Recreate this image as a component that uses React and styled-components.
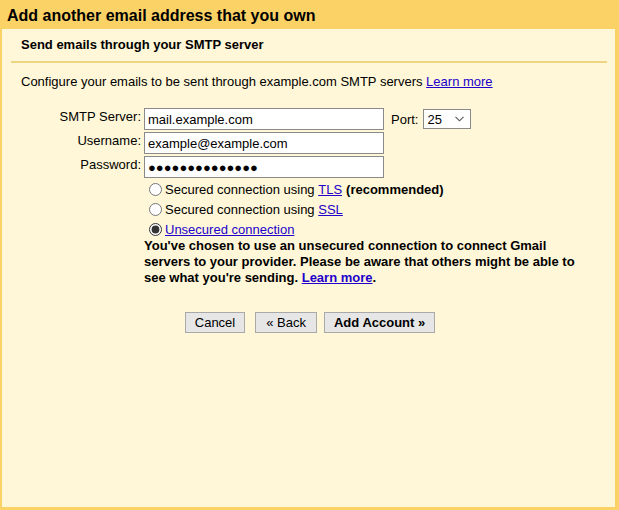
import React from "react";
import styled, { createGlobalStyle } from "styled-components";

const Global = createGlobalStyle`
    html, body {margin:0; padding:0; background:#fbd266;}
    body {font-family:"Liberation Sans", Arial, sans-serif; font-size:13px; color:#000;}
`;

const Page = styled.div`
    display:flex; flex-direction:column; width:619px; height:510px; background:#fbd266;
`;

const TitleBar = styled.h1`
    margin:0; height:29px; padding:0 0 0 7px; box-sizing:border-box;
    font-size:16px; font-weight:bold; line-height:31px; color:#000;
`;

const Panel = styled.div`
    flex:1; margin:0 4px 3px 2px; background:#fff7d7;
`;

const SectionHead = styled.h2`
    margin:0 8px 0 9px; padding:8px 0 9px 10px;
    border-bottom:2px solid #eed582;
    font-size:13px; font-weight:bold; line-height:15px;
`;

const Intro = styled.p`
    margin:11px 0 0 19px; line-height:15px;
`;

const Link = styled.a`
    color:#2200cc; text-decoration:underline; cursor:pointer;
`;

const FormGrid = styled.div`
    display:grid; grid-template-columns:139px 240px auto; column-gap:3px; row-gap:2px;
    align-items:center; margin-top:19px;
`;

const Label = styled.label`
    text-align:right; align-self:start; padding-top:1px; line-height:15px;
`;

const TextInput = styled.input`
    box-sizing:border-box; width:240px; height:22px; margin:0; padding:1px 3px;
    border:1px solid #8a8a8a; background:#fff;
    font-family:"Liberation Sans", "DejaVu Sans", Arial, sans-serif; font-size:13px; color:#000;
    outline:none;
`;

const PortBox = styled.div`
    display:flex; align-items:center; gap:5px; padding-left:4px;
`;

const SelectWrap = styled.div`
    position:relative; width:48px; height:20px;
`;

const PortSelect = styled.select`
    appearance:none; box-sizing:border-box; width:48px; height:20px; margin:0; padding:0 0 0 3px;
    border:1px solid #8a8a8a; border-radius:0; background:#fff;
    font-family:"Liberation Sans", Arial, sans-serif; font-size:13px; color:#000;
`;

const Chevron = styled.svg`
    position:absolute; right:7px; top:7px; width:9px; height:6px; pointer-events:none;
`;

const Options = styled.div`
    margin:1px 0 0 142px; width:447px;
`;

const RadioRow = styled.label`
    display:flex; align-items:center; height:20px; line-height:15px;
`;

const Radio = styled.input`
    width:13px; height:13px; margin:0 3px 0 5px; accent-color:#333;
`;

const Bold = styled.b`
    margin-left:4px;
`;

const Warning = styled.p`
    margin:-1px 0 0; font-weight:bold; line-height:16px;
`;

const Buttons = styled.div`
    display:flex; justify-content:center; gap:7px; margin-top:26px; padding-left:3px;
`;

const Button = styled.button`
    box-sizing:border-box; height:21px; margin-right:${p => p.$after || 0}px;
    padding:0 ${p => p.$pad || 9}px;
    border:1px solid #a9a9a9; background:#e6e6e6; border-radius:0;
    font-family:"Liberation Sans", Arial, sans-serif; font-size:13px;
    font-weight:${p => (p.$primary ? "bold" : "normal")}; color:#000;
`;

export default function App() {
    return (
        <Page>
            <Global />
            <TitleBar>Add another email address that you own</TitleBar>
            <Panel>
                <SectionHead>Send emails through your SMTP server</SectionHead>
                <Intro>
                    Configure your emails to be sent through example.com SMTP servers <Link>Learn more</Link>
                </Intro>
                <FormGrid>
                    <Label>SMTP Server:</Label>
                    <TextInput defaultValue="mail.example.com" />
                    <PortBox>
                        Port:
                        <SelectWrap>
                            <PortSelect defaultValue="25">
                                <option>25</option>
                                <option>465</option>
                                <option>587</option>
                            </PortSelect>
                            <Chevron viewBox="0 0 9 6">
                                <path d="M0.5 0.8 L4.5 4.8 L8.5 0.8" fill="none" stroke="#555" strokeWidth="1.1" />
                            </Chevron>
                        </SelectWrap>
                    </PortBox>
                    <Label>Username:</Label>
                    <TextInput defaultValue="example@example.com" />
                    <span />
                    <Label>Password:</Label>
                    <TextInput defaultValue="●●●●●●●●●●●●●●" />
                    <span />
                </FormGrid>
                <Options>
                    <RadioRow>
                        <Radio type="radio" name="sec" />
                        Secured connection using&nbsp;<Link>TLS</Link><Bold>(recommended)</Bold>
                    </RadioRow>
                    <RadioRow>
                        <Radio type="radio" name="sec" />
                        Secured connection using&nbsp;<Link>SSL</Link>
                    </RadioRow>
                    <RadioRow>
                        <Radio type="radio" name="sec" defaultChecked />
                        <Link>Unsecured connection</Link>
                    </RadioRow>
                    <Warning>
                        You've chosen to use an unsecured connection to connect Gmail servers to your provider.
                        Please be aware that others might be able to see what you're sending. <Link>Learn more</Link>.
                    </Warning>
                </Options>
                <Buttons>
                    <Button $after={3}>Cancel</Button>
                    <Button $pad={10}>« Back</Button>
                    <Button $primary>Add Account »</Button>
                </Buttons>
            </Panel>
        </Page>
    );
}
